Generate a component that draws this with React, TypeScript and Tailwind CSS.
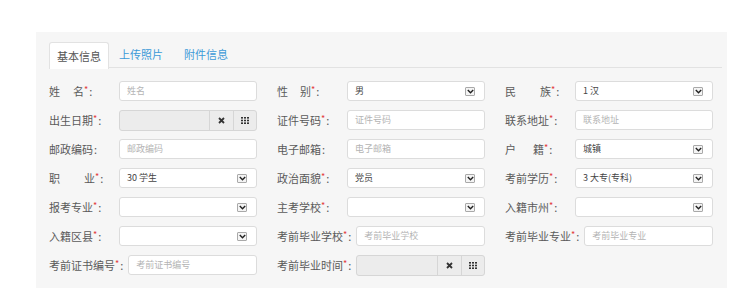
import React from 'react'

const font = { fontFamily: '"Noto Sans CJK SC", "Liberation Sans", sans-serif' }

type Field =
  | { kind: 'text'; label: React.ReactNode; ph: string }
  | { kind: 'select'; label: React.ReactNode; value?: string }
  | { kind: 'date'; label: React.ReactNode }

function Spaced({ a, b, gap }: { a: string; b: string; gap: string }) {
  return (
    <span className="flex">
      <span className={gap}>{a}</span>
      <span>{b}</span>
    </span>
  )
}

function Req() {
  return <span className="text-[#e23b3b] text-[9px] leading-none relative -top-[2px]">*</span>
}

function Chevron() {
  return (
    <span className="flex items-center justify-center w-[10px] h-[9px] border border-[#a9a9a9] bg-[#f4f4f4] rounded-[1px]">
      <svg width="7" height="5" viewBox="0 0 7 5">
        <path d="M0.8 1 L3.5 3.8 L6.2 1" fill="none" stroke="#222" strokeWidth="1.4" />
      </svg>
    </span>
  )
}

function Control({ f }: { f: Field }) {
  if (f.kind === 'text') {
    return (
      <div className="flex-1 h-[20px] bg-white border border-[#dcdcdc] rounded-[3px] flex items-center pl-[7px] text-[9px] text-[#b4b4b4]">
        {f.ph}
      </div>
    )
  }
  if (f.kind === 'select') {
    return (
      <div className="flex-1 h-[20px] bg-white border border-[#dcdcdc] rounded-[3px] flex items-center justify-between pl-[7px] pr-[9px] text-[9px] text-[#444]">
        <span>{f.value ?? ''}</span>
        <Chevron />
      </div>
    )
  }
  return (
    <div className="flex-1 h-[21px] bg-[#ececec] border border-[#d6d6d6] rounded-[3px] flex">
      <div className="flex-1" />
      <div className="w-[24px] border-l border-[#d6d6d6] flex items-center justify-center">
        <svg width="7" height="7" viewBox="0 0 7 7">
          <path d="M1 1 L6 6 M6 1 L1 6" stroke="#333" strokeWidth="1.8" />
        </svg>
      </div>
      <div className="w-[23px] border-l border-[#d6d6d6] flex items-center justify-center">
        <svg width="8" height="7" viewBox="0 0 8 7" fill="#333">
          <rect x="0" y="0" width="2" height="1.6" />
          <rect x="3" y="0" width="2" height="1.6" />
          <rect x="6" y="0" width="2" height="1.6" />
          <rect x="0" y="2.7" width="2" height="1.6" />
          <rect x="3" y="2.7" width="2" height="1.6" />
          <rect x="6" y="2.7" width="2" height="1.6" />
          <rect x="0" y="5.4" width="2" height="1.6" />
          <rect x="3" y="5.4" width="2" height="1.6" />
          <rect x="6" y="5.4" width="2" height="1.6" />
        </svg>
      </div>
    </div>
  )
}

const fields: Field[] = [
  { kind: 'text', label: <Spaced a="姓" b="名" gap="w-[24px]" />, ph: '姓名' },
  { kind: 'select', label: <Spaced a="性" b="别" gap="w-[23px]" />, value: '男' },
  { kind: 'select', label: <Spaced a="民" b="族" gap="w-[35px]" />, value: '1 汉' },
  { kind: 'date', label: '出生日期' },
  { kind: 'text', label: '证件号码', ph: '证件号码' },
  { kind: 'text', label: '联系地址', ph: '联系地址' },
  { kind: 'text', label: '邮政编码', ph: '邮政编码' },
  { kind: 'text', label: '电子邮箱', ph: '电子邮箱' },
  { kind: 'select', label: <Spaced a="户" b="籍" gap="w-[28px]" />, value: '城镇' },
  { kind: 'select', label: <Spaced a="职" b="业" gap="w-[35px]" />, value: '30 学生' },
  { kind: 'select', label: '政治面貌', value: '党员' },
  { kind: 'select', label: '考前学历', value: '3 大专(专科)' },
  { kind: 'select', label: '报考专业' },
  { kind: 'select', label: '主考学校' },
  { kind: 'select', label: '入籍市州' },
  { kind: 'select', label: '入籍区县' },
  { kind: 'text', label: '考前毕业学校', ph: '考前毕业学校' },
  { kind: 'text', label: '考前毕业专业', ph: '考前毕业专业' },
  { kind: 'text', label: '考前证书编号', ph: '考前证书编号' },
  { kind: 'date', label: '考前毕业时间' },
]

// fields without the red star
const optional = new Set(['邮政编码', '电子邮箱'])

export default function App() {
  return (
    <div className="w-[754px] h-[301px] bg-white pt-[32px] pl-[36px]" style={font}>
      <div className="w-[691px] h-[256px] bg-[#f6f6f6] pl-[13px] pr-[5px] pt-[10px]">
        <div className="flex h-[26px] border-b border-[#e2e2e2] text-[11px]">
          <div className="w-[60px] h-[27px] bg-white border border-b-0 border-[#e2e2e2] rounded-t-[3px] flex items-center justify-center text-[#555]">
            基本信息
          </div>
          <div className="ml-[10px] flex items-center text-[#3d9ad8]">上传照片</div>
          <div className="ml-[21px] flex items-center text-[#3d9ad8]">附件信息</div>
        </div>
        <div className="mt-[13px] grid grid-cols-[208px_208px_208px] gap-x-[20px] gap-y-[9px]">
          {fields.map((f, i) => {
            const key = typeof f.label === 'string' ? f.label : ''
            return (
              <div key={i} className="flex items-center h-[20px]">
                <div className="min-w-[70px] shrink-0 flex items-center text-[11px] text-[#5a5a5a] whitespace-nowrap pr-[5px]">
                  {f.label}
                  {!optional.has(key) && <Req />}
                  <span className="ml-[1px]">:</span>
                </div>
                <Control f={f} />
              </div>
            )
          })}
        </div>
      </div>
    </div>
  )
}
